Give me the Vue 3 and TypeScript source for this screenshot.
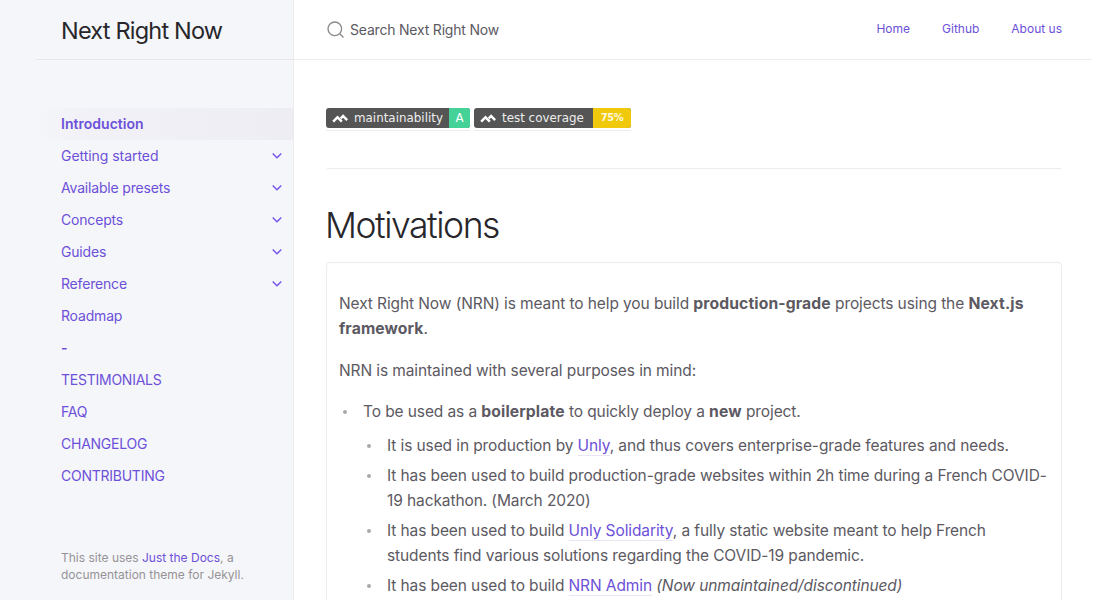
<script setup lang="ts">
interface NavItem { label: string; active?: boolean; expandable?: boolean; kind?: string }

const navItems: NavItem[] = [
  { label: 'Introduction', active: true },
  { label: 'Getting started', expandable: true, kind: 'loose' },
  { label: 'Available presets', expandable: true },
  { label: 'Concepts', expandable: true },
  { label: 'Guides', expandable: true },
  { label: 'Reference', expandable: true },
  { label: 'Roadmap' },
  { label: '-', kind: 'dash' },
  { label: 'TESTIMONIALS', kind: 'caps' },
  { label: 'FAQ' },
  { label: 'CHANGELOG', kind: 'caps' },
  { label: 'CONTRIBUTING', kind: 'caps' },
]
const auxLinks: string[] = ['Home', 'Github', 'About us']
const badges = [
  { label: 'maintainability', value: 'A', kind: 'grade' },
  { label: 'test coverage', value: '75%', kind: 'coverage' },
]
</script>

<template>
  <div class="page">
    <aside class="sidebar">
      <div class="site-header"><a class="site-title">Next Right Now</a></div>
      <nav class="nav">
        <a v-for="item in navItems" :key="item.label" class="nav-item" :class="[item.kind, { active: item.active }]">
          <span>{{ item.label }}</span>
          <svg v-if="item.expandable" class="chevron" viewBox="0 0 12 8"><path d="M1.7 1.5 6 5.7l4.3-4.2" /></svg>
        </a>
      </nav>
      <footer class="site-footer">This site uses <a>Just the Docs</a>, a<br />documentation theme for Jekyll.</footer>
    </aside>
    <main class="main">
      <header class="topbar">
        <div class="search">
          <svg class="search-icon" viewBox="0 0 18 18"><circle cx="7.8" cy="7.8" r="6.8" /><path d="m12.8 12.8 3.7 3.7" /></svg>
          <span>Search Next Right Now</span>
        </div>
        <nav class="aux"><a v-for="link in auxLinks" :key="link">{{ link }}</a></nav>
      </header>
      <div class="content">
        <div class="badges">
          <a v-for="b in badges" :key="b.kind" class="badge-link">
            <span class="badge" :class="b.kind">
              <svg class="badge-logo" viewBox="0 0 16 9"><path d="m7.9 3.5 3.2-3.2L16 5.2l-1.7 1.7-3.2-3.2-1.5 1.5z" /><path d="M5.5 1.5 10.7 6.7 9 8.4 5.5 4.9 2 8.4.3 6.7z" /></svg>
              <span class="badge-label">{{ b.label }}</span>
              <span class="badge-value">{{ b.value }}</span>
            </span>
          </a>
        </div>
        <hr />
        <h1>Motivations</h1>
        <section class="panel">
          <p>
            <span class="ln">Next Right Now (NRN) is meant to help you build <b>production-grade</b> projects using the <b>Next.js</b></span>
            <span class="ln"><b>framework</b>.</span>
          </p>
          <p><span class="ln">NRN is maintained with several purposes in mind:</span></p>
          <ul>
            <li>
              <span class="ln">To be used as a <b>boilerplate</b> to quickly deploy a <b>new</b> project.</span>
              <ul>
                <li><span class="ln">It is used in production by <a>Unly</a>, and thus covers enterprise-grade features and needs.</span></li>
                <li>
                  <span class="ln">It has been used to build production-grade websites within 2h time during a French COVID-</span>
                  <span class="ln">19 hackathon. (March 2020)</span>
                </li>
                <li>
                  <span class="ln">It has been used to build <a>Unly Solidarity</a>, a fully static website meant to help French</span>
                  <span class="ln">students find various solutions regarding the COVID-19 pandemic.</span>
                </li>
                <li><span class="ln">It has been used to build <a>NRN Admin</a> <i>(Now unmaintained/discontinued)</i></span></li>
              </ul>
            </li>
          </ul>
        </section>
      </div>
    </main>
  </div>
</template>

<style>
body { margin: 0; overflow: hidden; }
</style>

<style scoped>
.page {
  display: flex;
  width: 1109px;
  height: 600px;
  overflow: hidden;
  background: #fff;
  color: #5c5962;
  font-family: Inter, "Liberation Sans", sans-serif;
  font-size: 15.5px;
}
.page * { box-sizing: border-box; }
a { color: #6c50d8; }
.sidebar {
  display: flex;
  flex: 0 0 294px;
  flex-direction: column;
  background: #f5f6fa;
  border-right: 1px solid #eeebee;
}
.site-header {
  height: 60px;
  margin-left: 36px;
  padding-left: 25px;
  border-bottom: 1px solid #e8e6ea;
}
.site-title {
  color: #27262b;
  font-size: 23.5px;
  line-height: 62px;
  letter-spacing: -0.8px;
}
.nav { padding-top: 48px; }
.nav-item {
  display: flex;
  align-items: center;
  justify-content: space-between;
  height: 32px;
  padding: 0 10px 0 61px;
  font-size: 14px;
  letter-spacing: -0.18px;
}
.nav-item span { margin-top: -1px; }
.nav-item.loose { letter-spacing: -0.05px; }
.nav-item.caps { letter-spacing: -0.25px; }
.nav-item.dash { font-weight: 600; }
.nav-item.active {
  background: linear-gradient(90deg, rgba(235, 237, 245, 0) 40px, #f1f1f7 80px, #eeedf4);
  font-weight: 600;
  letter-spacing: 0.03px;
}
.chevron { width: 12px; height: 8px; fill: none; stroke: #7253ed; stroke-width: 1.4; }
.site-footer {
  padding: 57px 0 0 61px;
  color: #959396;
  font-size: 12px;
  line-height: 17px;
}
.main { flex: 1; min-width: 0; }
.topbar {
  display: flex;
  justify-content: space-between;
  width: 798px;
  height: 60px;
  padding: 0 30px 0 33px;
  border-bottom: 1px solid #eeebee;
}
.search { display: flex; align-items: center; font-size: 14px; letter-spacing: -0.2px; }
.search-icon { width: 18px; height: 18px; margin-right: 5px; fill: none; stroke: #8a888d; stroke-width: 1.3; }
.aux { display: flex; gap: 32px; font-size: 12px; line-height: 58px; }
.content { width: 736px; margin-left: 32px; padding-top: 48px; }
.badges { display: flex; gap: 4px; height: 20px; }
.badge-link { height: 23px; border-bottom: 1px solid #eeebee; }
.badge {
  display: flex;
  align-items: center;
  width: 144px;
  height: 20px;
  overflow: hidden;
  border-radius: 3px;
  background: #555;
  color: #fff;
  font: 11.9px/20px "DejaVu Sans", sans-serif;
}
.badge.coverage { width: 157px; }
.badge-logo { width: 16px; height: 9px; margin-left: 6px; fill: #fff; }
.badge-label { flex: 1; padding-left: 6px; color: #eee; white-space: nowrap; }
.badge-value { width: 21px; text-align: center; background: #45d298; }
.coverage .badge-value { width: 38px; background: #f0c90c; color: #fdf8dc; font-size: 10px; font-weight: 700; letter-spacing: -0.5px; }
hr { height: 1px; margin: 40px 1px 0; border: 0; background: #eeebee; }
h1 {
  margin: 33px 0 0 -1px;
  color: #27262b;
  font-size: 35.5px;
  font-weight: 300;
  line-height: 47px;
  letter-spacing: -1.45px;
}
.panel {
  height: 400px;
  margin-top: 13px;
  padding: 28px 0 0 12px;
  border: 1px solid #eeebee;
  border-radius: 4px;
}
p { margin: 0 0 17px; }
p + ul { margin-top: -1px; }
.ln { display: block; line-height: 25px; white-space: nowrap; letter-spacing: -0.1px; }
.ln a { border-bottom: 1px solid #e9e6f1; }
b { font-size: 15.7px; font-weight: 700; letter-spacing: 0.12px; line-height: 1; }
ul { margin: 0; padding: 0; list-style: none; }
li { position: relative; padding-left: 24px; }
li::before {
  content: "";
  position: absolute;
  top: 11px;
  left: 4px;
  width: 4px;
  height: 4px;
  border-radius: 50%;
  background: #aaa8ad;
}
li ul { margin-top: 9px; }
li li + li { margin-top: 5px; }
</style>
